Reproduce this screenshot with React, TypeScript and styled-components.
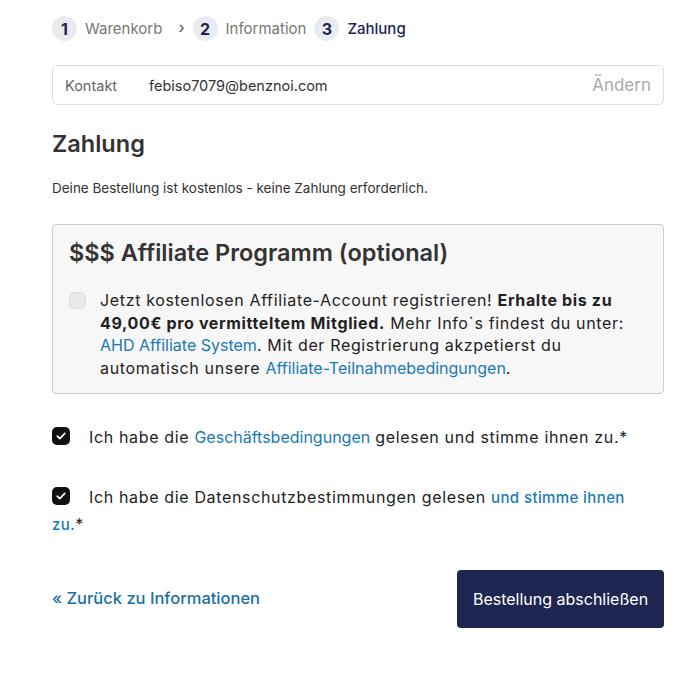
import React from 'react';
import styled, { createGlobalStyle } from 'styled-components';

const GlobalStyle = createGlobalStyle`
  body {
    margin: 0;
    background: #fff;
    font-family: Inter, "Liberation Sans", sans-serif;
    color: #333;
  }
`;

const steps = [
  { num: 1, label: 'Warenkorb', active: false },
  { num: 2, label: 'Information', active: false },
  { num: 3, label: 'Zahlung', active: true },
];

const Tick = () => (
  <svg width="10" height="8" viewBox="0 0 10 8" fill="none">
    <path d="M1.2 4.2 L3.8 6.6 L8.8 1.4" stroke="#fff" strokeWidth="1.6" strokeLinecap="round" strokeLinejoin="round" />
  </svg>
);

const App: React.FC = () => {
  return (
    <Page>
      <GlobalStyle />
      <Breadcrumb>
        {steps.map((s, i) => (
          <React.Fragment key={s.num}>
            <Step>
              <StepNum>{s.num}</StepNum>
              <StepLabel $active={s.active}>{s.label}</StepLabel>
            </Step>
            {i === 0 && <Chevron>›</Chevron>}
          </React.Fragment>
        ))}
      </Breadcrumb>

      <ContactBox>
        <ContactLabel>Kontakt</ContactLabel>
        <ContactValue>febiso7079@benznoi.com</ContactValue>
        <ChangeLink>Ändern</ChangeLink>
      </ContactBox>

      <Title>Zahlung</Title>
      <Notice>Deine Bestellung ist kostenlos - keine Zahlung erforderlich.</Notice>

      <AffiliateBox>
        <AffiliateTitle>$$$ Affiliate Programm (optional)</AffiliateTitle>
        <AffiliateRow>
          <EmptyCheck />
          <BodyText>
            Jetzt kostenlosen Affiliate-Account registrieren! <b>Erhalte bis zu 49,00€ pro vermitteltem Mitglied.</b> Mehr Info`s findest du unter:{' '}
            <TextLink>AHD Affiliate System</TextLink>. Mit der Registrierung akzpetierst du automatisch unsere{' '}
            <TextLink>Affiliate-Teilnahmebedingungen</TextLink>.
          </BodyText>
        </AffiliateRow>
      </AffiliateBox>

      <Terms>
        <TermRow>
          <CheckedBox>
            <Tick />
          </CheckedBox>
          Ich habe die <TextLink>Geschäftsbedingungen</TextLink> gelesen und stimme ihnen zu.*
        </TermRow>
        <TermRow>
          <CheckedBox>
            <Tick />
          </CheckedBox>
          Ich habe die Datenschutzbestimmungen gelesen <TextLink $small>und stimme ihnen zu.</TextLink>*
        </TermRow>
      </Terms>

      <Footer>
        <BackLink>« Zurück zu Informationen</BackLink>
        <SubmitButton>Bestellung abschließen</SubmitButton>
      </Footer>
    </Page>
  );
};

const Page = styled.div`
  width: 612px;
  padding: 16px 0 40px 52px;
`;

const Breadcrumb = styled.div`
  display: flex;
  align-items: center;
`;

const Step = styled.div`
  display: flex;
  align-items: center;
  gap: 8px;
  margin-right: 8px;
`;

const StepNum = styled.span`
  width: 25px;
  height: 25px;
  border-radius: 50%;
  background: #e9ebef;
  color: #1e2550;
  font-size: 16px;
  font-weight: 700;
  display: flex;
  align-items: center;
  justify-content: center;
`;

const StepLabel = styled.span<{ $active: boolean }>`
  font-size: 15px;
  font-weight: ${(p) => (p.$active ? 500 : 400)};
  color: ${(p) => (p.$active ? '#1e2550' : '#777')};
`;

const Chevron = styled.span`
  color: #555;
  font-size: 16px;
  margin: -3px 8px 0 8px;
`;

const ContactBox = styled.div`
  margin-top: 24px;
  height: 40px;
  border: 1px solid #ddd;
  border-radius: 5px;
  display: flex;
  align-items: center;
  padding: 0 12px;
  box-sizing: border-box;
`;

const ContactLabel = styled.span`
  width: 84px;
  font-size: 14.5px;
  color: #666;
`;

const ContactValue = styled.span`
  flex: 1;
  font-size: 14.5px;
  color: #333;
`;

const ChangeLink = styled.span`
  font-size: 17px;
  color: #aaa;
`;

const Title = styled.h2`
  margin: 24px 0 0;
  font-size: 23.5px;
  font-weight: 600;
  color: #333;
  line-height: 30px;
`;

const Notice = styled.p`
  margin: 21px 0 0;
  font-size: 13.5px;
  color: #333;
  line-height: 16px;
`;

const AffiliateBox = styled.div`
  margin-top: 28px;
  background: #f7f7f7;
  border: 1px solid #ccc;
  border-radius: 4px;
  padding: 13px 16px 13px;
`;

const AffiliateTitle = styled.h3`
  margin: 0;
  font-size: 23.5px;
  font-weight: 600;
  color: #333;
  line-height: 30px;
`;

const AffiliateRow = styled.div`
  display: flex;
  align-items: flex-start;
  gap: 14px;
  margin-top: 21px;
`;

const EmptyCheck = styled.span`
  flex: none;
  width: 17px;
  height: 17px;
  margin-top: 3px;
  border-radius: 5px;
  background: #e9e9e9;
  border: 1px solid #ddd;
  box-sizing: border-box;
`;

const BodyText = styled.div`
  font-size: 16px;
  line-height: 22.7px;
  letter-spacing: 0.65px;
  color: #222;
  b {
    font-weight: 700;
  }
`;

const TextLink = styled.a<{ $small?: boolean }>`
  color: #1a7ab5;
  font-size: ${(p) => (p.$small ? '15px' : '16px')};
  font-weight: ${(p) => (p.$small ? 500 : 400)};
  letter-spacing: ${(p) => (p.$small ? '0.4px' : '0')};
`;

const Terms = styled.div`
  margin-top: 30px;
  display: flex;
  flex-direction: column;
  gap: 33px;
`;

const TermRow = styled.div`
  font-size: 16px;
  line-height: 27px;
  letter-spacing: 0.65px;
  color: #222;
  padding-right: 28px;
`;

const CheckedBox = styled.span`
  display: inline-flex;
  align-items: center;
  justify-content: center;
  width: 18px;
  height: 18px;
  border-radius: 5px;
  background: #111;
  margin-right: 19px;
  vertical-align: middle;
  position: relative;
  top: -2px;
`;

const Footer = styled.div`
  margin-top: 32px;
  display: flex;
  align-items: center;
  justify-content: space-between;
`;

const BackLink = styled.a`
  color: #1a6fa3;
  font-size: 16.5px;
  font-weight: 500;
  margin-top: -2px;
`;

const SubmitButton = styled.button`
  width: 207px;
  height: 58px;
  border: none;
  border-radius: 4px;
  background: #1e2550;
  color: #fff;
  font-family: Inter, "Liberation Sans", sans-serif;
  font-size: 16px;
`;

export default App;
